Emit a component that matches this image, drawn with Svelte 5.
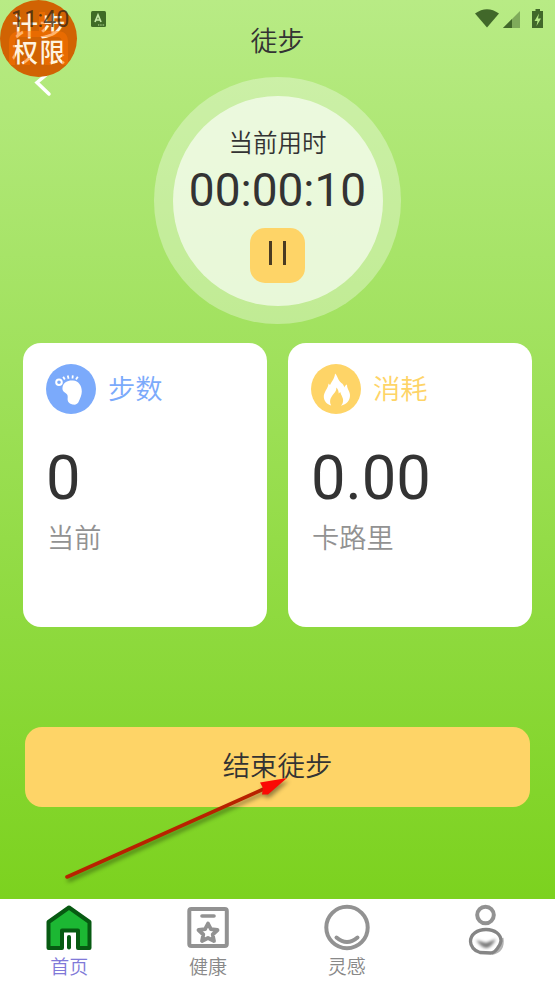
<script>
    let elapsed = '00:00:10';

    let cards = [
        { icon: 'foot', title: '步数', value: '0', unit: '当前' },
        { icon: 'fire', title: '消耗', value: '0.00', unit: '卡路里' },
    ]

    let tabs = [
        { icon: 'home', name: '首页' },
        { icon: 'health', name: '健康' },
        { icon: 'idea', name: '灵感' },
        { icon: 'mine', name: '' },
    ]

    let selectedTab = 'home';
</script>

<main class="page">
    <div class="status">
        <span class="clock">11:40</span>
        <svg class="app-icon" width="15" height="16" viewBox="0 0 15 16">
            <rect width="15" height="16" rx="1.5" fill="#3f6b26" />
            <path d="M4 11 L7 4 L10 11 M5 9 H9" fill="none" stroke="#c3e8a5" stroke-width="1.7" />
            <path d="M7 14 H14" stroke="#c3e8a5" stroke-dasharray="1.3 1" />
        </svg>
        <svg class="signals" width="70" height="20" viewBox="0 0 70 20">
            <path d="M0 4.500 Q12 -4 24 4.500 L12 18.500 Z" fill="#41682a" />
            <path d="M28 19 L45 2 V19 Z" fill="#7fab5b" />
            <path d="M28 19 L37 10 V19 Z" fill="#41682a" />
            <path d="M60.500 0 h4.500 v2 h3 v17 h-11 v-17 h3.500 z" fill="#41682a" />
            <path d="M64 4.500 L59.500 12 H62.500 L61.500 17 L66 9.500 H63 Z" fill="#b5e984" />
        </svg>
    </div>

    <header class="header">
        <svg class="back" width="18" height="26" viewBox="0 0 18 26">
            <path d="M12 4 L3 11.500 L15 23" />
        </svg>
        <h1>徒步</h1>
    </header>

    <section class="ring">
        <div class="dial">
            <div class="dial-label">当前用时</div>
            <div class="time">{elapsed}</div>
            <button class="pause" aria-label="pause">
                <i></i>
                <i></i>
            </button>
        </div>
    </section>

    <section class="cards">
        {#each cards as card}
            <div class="card {card.icon}">
                <div class="card-head">
                    <svg width="50" height="50" viewBox="0 0 50 50">
                        <circle cx="25" cy="25" r="25" fill="currentColor" />
                        {#if card.icon === 'foot'}
                            <path d="M16.500 23.500 C17 18.500 22 16 27 16.500 C32.500 17 35.800 21.500 35.800 27.500 C35.800 31 34.200 34 33 37 C31.800 40.200 29.500 41 26.500 40.500 C22.500 39.700 21.200 37 21.700 33.500 C22 31 20.800 29.800 18.800 28.500 C16.800 27.200 16.200 25.500 16.500 23.500 Z" fill="#fff" />
                            <circle cx="13" cy="18.300" r="2.800" fill="none" stroke="#fff" stroke-width="2" />
                            <path d="M17.200 12.800 L18.800 15.500 M21.700 11.500 L22.600 14.700 M26.800 11.300 L26.500 14.500 M31.800 12.800 L30 15.500" stroke="#fff" stroke-width="1.800" />
                        {:else}
                            <path d="M24 9.500 C23.800 14 20.800 17.500 19 21 L17.500 19.500 C17.500 24 12.500 28 12.800 33 C13.100 37 16 40.500 20.200 41.500 C17.500 36.500 20.500 32.500 22.500 30 C25 27.500 25.300 26 25.300 23.500 C27 25.200 27.700 27.200 27.700 29.500 L29.300 28 C30 31.500 32.800 34 32 37.500 C31.800 39.500 31 40.500 30 41.700 C35.500 40.500 39.200 36.500 39 31 C38.700 26.500 36 25.500 36 20.500 C34.500 21 33.700 22 33.500 23.500 C32 18.500 29.500 19.500 27.500 15.500 C26.200 13 26 11 24 9.500 Z" fill="#fff" />
                        {/if}
                    </svg>
                    <h2>{card.title}</h2>
                </div>
                <div class="value">{card.value}</div>
                <div class="unit">{card.unit}</div>
            </div>
        {/each}
    </section>

    <button class="finish">结束徒步</button>

    <nav class="tabs">
        {#each tabs as tab}
            <div class="tab" class:active={tab.icon === selectedTab}>
                <svg width="48" height="54" viewBox="0 0 48 54">
                    {#if tab.icon === 'home'}
                        <path d="M3.500 19 L24 4.500 L44.500 19 V45 H33 V27.500 H17 V45 H3.500 Z" fill="#1cb733" stroke="#075a12" stroke-width="4" stroke-linejoin="round" />
                        <path d="M24 34 V44.500" stroke="#075a12" stroke-width="4" stroke-linecap="round" />
                    {:else if tab.icon === 'health'}
                        <g fill="none" stroke="#929292" stroke-width="4" stroke-linecap="round" stroke-linejoin="round">
                            <rect x="5.300" y="6" width="37.500" height="37" rx="2" />
                            <path d="M18 13 H30" stroke-width="3.600" />
                            <path d="M24 20.500 L26.900 26.200 L33.500 27 L28.700 31.500 L30 38 L24 35 L18 38 L19.300 31.500 L14.500 27 L21.100 26.200 Z" stroke-width="3.800" />
                        </g>
                    {:else if tab.icon === 'idea'}
                        <g fill="none" stroke="#929292" stroke-width="4" stroke-linecap="round">
                            <circle cx="24" cy="24.500" r="20.700" />
                            <path d="M13.500 34.500 Q24 43.500 34.500 34.500" />
                        </g>
                    {:else}
                        <circle cx="23.500" cy="12" r="8.300" fill="none" stroke="#929292" stroke-width="4" />
                        <path d="M30 50.500 Q42 48 40 35" fill="none" stroke="#b4b4b4" stroke-width="3" />
                        <path d="M24 26.500 C33 26.500 39 31.500 39 38 C38.500 42 33 50 29 50 L18 49.500 C12 48 8.500 43 8.500 38.500 C8.500 31.500 15 26.500 24 26.500 Z" fill="none" stroke="#858585" stroke-width="3.300" />
                        <path d="M14 37 L24 40 L34 36 Q29 45 24 45 Q19 44 14 37 Z" fill="#777" class="smudge" />
                    {/if}
                </svg>
                <span>{tab.name}</span>
            </div>
        {/each}
    </nav>

    <div class="float">
        <svg width="77" height="77" viewBox="0 0 77 77">
            <path d="M12 65 V42 Q12 34 22 34 H57 Q65 34 65 42 V65 M27 65 V58 M48 65 V58 M42 12 V32" fill="none" stroke="#ff7400" stroke-width="6" />
        </svg>
        <span>计步<br />权限</span>
    </div>

    <svg class="arrow" width="240" height="120" viewBox="0 0 240 120">
        <path d="M7 107 L206 18" stroke="#b82200" stroke-width="3.600" stroke-linecap="round" />
        <path d="M227 8 L200 12.500 L203 18 L202 24.500 L208 24.500 Z" fill="#fb0a05" />
    </svg>
</main>

<style>
    :global(body) {
        margin: 0;
    }
    .page {
        position: relative;
        display: flex;
        flex-direction: column;
        width: 555px;
        height: 988px;
        overflow: hidden;
        background: linear-gradient(#b8eb85 0, #7cd21f 898px);
        color: #333;
        font-family: Roboto, "Noto Sans CJK SC", sans-serif;
    }
    h1, h2 {
        margin: 0;
    }
    h1, h2, .dial-label, .unit, .finish, .tab {
        font-family: "Noto Sans CJK SC", sans-serif;
        font-weight: 350;
    }
    button {
        border: none;
        padding: 0;
        color: inherit;
    }

    .status {
        display: flex;
        align-items: flex-start;
        height: 30px;
        box-sizing: border-box;
        padding: 9px 10px 0 11px;
    }
    .clock {
        position: relative;
        z-index: 2;
        width: 80px;
        font-size: 23.5px;
        line-height: 20px;
        color: rgba(60, 40, 20, 0.8);
    }
    .app-icon {
        margin-top: 2px;
    }
    .signals {
        margin-left: auto;
    }

    .header {
        display: grid;
        height: 47px;
    }
    .header h1 {
        grid-area: 1 / 1;
        text-align: center;
        font-size: 27px;
        line-height: 20px;
    }
    .back {
        grid-area: 1 / 1;
        margin: 41px 0 0 34px;
        fill: none;
        stroke: #fff;
        stroke-width: 3.5;
        stroke-linecap: round;
    }

    .ring {
        align-self: center;
        flex: none;
        width: 247px;
        height: 247px;
        display: grid;
        place-items: center;
        border-radius: 50%;
        background: rgba(255, 255, 255, 0.33);
    }
    .dial {
        width: 210px;
        height: 210px;
        box-sizing: border-box;
        padding-top: 31px;
        display: flex;
        flex-direction: column;
        align-items: center;
        border-radius: 50%;
        background: rgba(255, 255, 255, 0.63);
    }
    .dial-label {
        font-size: 24.5px;
        line-height: 30px;
    }
    .time {
        font-size: 46px;
        line-height: 66px;
    }
    .pause {
        display: flex;
        justify-content: center;
        gap: 11px;
        width: 55px;
        height: 55px;
        margin-top: 5px;
        padding-top: 13px;
        border-radius: 15px;
        background: #fed467;
    }
    .pause i {
        width: 3px;
        height: 24px;
        background: #4a3b22;
    }

    .cards {
        display: grid;
        grid-template-columns: 1fr 1fr;
        gap: 21px;
        padding: 0 23px;
        margin-top: 19px;
    }
    .card {
        height: 284px;
        box-sizing: border-box;
        padding: 21px 23px;
        border-radius: 18px;
        background: #fff;
    }
    .card-head {
        display: flex;
        align-items: flex-start;
        gap: 12px;
        height: 50px;
    }
    .foot .card-head {
        color: #7baafb;
    }
    .fire .card-head {
        color: #fed467;
    }
    h2 {
        font-size: 27.3px;
        line-height: 46px;
    }
    .value {
        margin-top: 28px;
        font-size: 61.5px;
        line-height: 73px;
    }
    .unit {
        margin-top: 1px;
        padding-left: 1px;
        font-size: 27.2px;
        line-height: 40px;
        color: #929292;
    }

    .finish {
        height: 80px;
        margin: 100px 25px 0;
        padding-bottom: 6px;
        border-radius: 17px;
        background: #fed467;
        font-size: 27.4px;
        line-height: 74px;
    }

    .tabs {
        display: grid;
        grid-template-columns: repeat(4, 1fr);
        height: 89px;
        margin-top: auto;
        background: #fff;
    }
    .tab {
        display: flex;
        flex-direction: column;
        align-items: center;
        padding-top: 4px;
        font-size: 19px;
        line-height: 18px;
        color: #888;
    }
    .tab.active {
        color: #8079d8;
    }
    .smudge {
        filter: blur(1.5px);
    }

    .float {
        position: absolute;
        z-index: 1;
        top: 0;
        left: 0;
        width: 77px;
        height: 77px;
        display: grid;
        place-items: center;
        border-radius: 50%;
        overflow: hidden;
        background: #d16303;
    }
    .float svg,
    .float span {
        grid-area: 1 / 1;
    }
    .float svg {
        opacity: 0.5;
    }
    .float span {
        padding: 2px 0 0 2px;
        font-size: 26px;
        font-weight: 500;
        line-height: 26px;
        letter-spacing: 1.5px;
        color: #fff3df;
    }
    .arrow {
        position: absolute;
        left: 60px;
        top: 770px;
        filter: drop-shadow(2px 3px 2px rgba(0, 0, 0, 0.4));
    }
</style>
